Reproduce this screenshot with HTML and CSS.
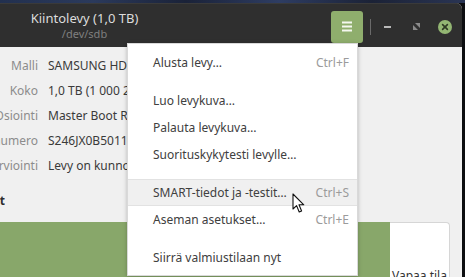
FILE: index.html
```html
<!DOCTYPE html>
<html lang="fi">
<head>
<meta charset="utf-8">
<link rel="stylesheet" href="styles.css">
</head>
<body>
<div class="desktop">
  <div class="wallpaper-strip"></div>
  <div class="window">
    <header class="headerbar">
      <div class="title-box">
        <div class="title">Kiintolevy (1,0 TB)</div>
        <div class="subtitle">/dev/sdb</div>
      </div>
      <div class="spacer"></div>
      <button class="menu-btn" aria-label="Valikko">
        <svg width="12" height="11" viewBox="0 0 12 11"><rect x="1" y="0.5" width="10" height="2" fill="#f4f7ef"/><rect x="1" y="4.5" width="10" height="2" fill="#f4f7ef"/><rect x="1" y="8.5" width="10" height="2" fill="#f4f7ef"/></svg>
      </button>
      <div class="hsep"></div>
      <div class="wm-btn min"><span class="min-bar"></span></div>
      <div class="wm-btn max">
        <svg width="7" height="7" viewBox="0 0 7 7"><polygon points="2,0 7,0 7,5" fill="#8a8a8a"/><polygon points="0,2 0,7 5,7" fill="#8a8a8a"/></svg>
      </div>
      <div class="wm-btn close">
        <svg width="14" height="14" viewBox="0 0 14 14"><circle cx="7" cy="7" r="7" fill="#93b673"/><path d="M4.6 4.6 L9.4 9.4 M9.4 4.6 L4.6 9.4" stroke="#2e3a24" stroke-width="1.6" stroke-linecap="round"/></svg>
      </div>
    </header>
    <main class="content">
      <div class="info">
        <div class="row"><div class="label"><span>Malli</span></div><div class="value">SAMSUNG HD103SJ</div></div>
        <div class="row"><div class="label"><span>Koko</span></div><div class="value">1,0 TB (1 000 204 886 016 tavua)</div></div>
        <div class="row"><div class="label"><span>Osiointi</span></div><div class="value">Master Boot Record</div></div>
        <div class="row"><div class="label"><span>Sarjanumero</span></div><div class="value">S246JX0B501127</div></div>
        <div class="row"><div class="label"><span>Arviointi</span></div><div class="value">Levy on kunnossa, 33° C</div></div>
      </div>
      <div class="section-head"><span>Taltiot</span></div>
      <div class="volumes">
        <div class="vol-used"></div>
        <div class="vol-free"><span>Vapaa tila</span></div>
        <div class="vol-rest"></div>
      </div>
    </main>
  </div>
  <div class="popover">
    <div class="item"><span>Alusta levy…</span><span class="acc">Ctrl+F</span></div>
    <div class="sep"></div>
    <div class="item"><span>Luo levykuva…</span></div>
    <div class="item"><span>Palauta levykuva…</span></div>
    <div class="item"><span>Suorituskykytesti levylle…</span></div>
    <div class="sep"></div>
    <div class="item hover"><span>SMART-tiedot ja -testit…</span><span class="acc">Ctrl+S</span></div>
    <div class="item"><span>Aseman asetukset…</span><span class="acc">Ctrl+E</span></div>
    <div class="sep"></div>
    <div class="item"><span>Siirrä valmiustilaan nyt</span></div>
  </div>
  <svg class="cursor" width="13" height="21" viewBox="0 0 13 21"><path d="M1 1 L1 16 L4.6 12.6 L7.2 19 L9.6 18 L7 11.8 L11.8 11.8 Z" fill="#ffffff" stroke="#111" stroke-width="1.1" stroke-linejoin="round"/></svg>
</div>
</body>
</html>
```
FILE: styles.css
```css
* { box-sizing: border-box; }
html, body { margin: 0; padding: 0; }
body {
  width: 465px;
  height: 277px;
  overflow: hidden;
  background: #0d0e10;
  font-family: "Noto Sans", "Open Sans", sans-serif;
}
.desktop {
  position: relative;
  width: 465px;
  height: 277px;
  overflow: hidden;
  background: #0c0d10;
}
.wallpaper-strip {
  height: 3px;
  background: linear-gradient(90deg, #22304f 0%, #2b3a5c 20%, #1a2238 40%, #2e3d63 60%, #1b2236 80%, #2a3554 100%);
}
.window {
  width: 462px;
  height: 274px;
  display: flex;
  flex-direction: column;
  border-top-right-radius: 6px;
  overflow: hidden;
  background: #f0f0f0;
}
.headerbar {
  height: 44px;
  flex: none;
  display: flex;
  align-items: center;
  background: #2f2f2f;
  border-top: 1px solid #3a3a3a;
}
.title-box {
  width: 169px;
  text-align: center;
  padding-bottom: 1px;
}
.title {
  color: #dcdcdc;
  font-size: 13px;
  line-height: 17px;
}
.subtitle {
  color: #7f7f7f;
  font-size: 11px;
  line-height: 14px;
}
.spacer { flex: 1; }
.menu-btn {
  width: 32px;
  height: 32px;
  margin-top: 2px;
  border: none;
  border-radius: 3px;
  background: #8fae6d;
  display: flex;
  align-items: center;
  justify-content: center;
  padding: 0;
}
.menu-btn svg { display: block; }
.hsep {
  width: 1px;
  height: 16px;
  margin: 2px 0 0 7px;
  background: #6a6a6a;
}
.wm-btn {
  display: flex;
  align-items: center;
  justify-content: center;
  margin-top: 2px;
}
.min { width: 30px; margin-left: 1px; }
.min-bar { display: block; width: 7px; height: 2px; background: #b9b9b9; }
.max { width: 28px; }
.close { width: 30px; margin-right: 2px; }
.close svg, .max svg { display: block; }

.content {
  flex: 1;
  display: flex;
  flex-direction: column;
}
.info {
  padding-top: 6px;
  display: flex;
  flex-direction: column;
}
.row {
  height: 25px;
  display: flex;
  align-items: center;
  font-size: 12px;
  white-space: nowrap;
}
.label {
  width: 38px;
  flex: none;
  display: flex;
  justify-content: flex-end;
  overflow: hidden;
  color: #8c8c8c;
}
.label span { flex: none; }
.value {
  margin-left: 10px;
  color: #3a3a3a;
}
.section-head {
  width: 5px;
  height: 24px;
  margin-top: 10px;
  display: flex;
  align-items: center;
  justify-content: flex-end;
  overflow: hidden;
  font-size: 12px;
  font-weight: bold;
  color: #2e2e2e;
  white-space: nowrap;
}
.section-head span { flex: none; }
.volumes {
  margin-top: 10px;
  flex: 1;
  display: flex;
}
.vol-used {
  width: 390px;
  background: #88a76a;
}
.vol-free {
  width: 60px;
  background: #ffffff;
  border: 1px solid #d6d6d6;
  border-left: none;
  border-bottom: none;
  border-top-right-radius: 4px;
  display: flex;
  align-items: flex-end;
  justify-content: center;
  font-size: 12px;
  color: #333;
  padding-bottom: 0;
}
.vol-free span { margin-bottom: -7px; white-space: nowrap; }
.vol-rest { flex: 1; }

.popover {
  position: absolute;
  left: 127px;
  top: 43px;
  width: 231px;
  padding: 5px 0 4px;
  background: #ffffff;
  border: 1px solid #d9d9d9;
  box-shadow: 0 1px 4px rgba(0,0,0,0.25);
  font-size: 12px;
  color: #404040;
}
.item {
  height: 27px;
  display: flex;
  align-items: center;
  justify-content: space-between;
  padding: 0 8px 0 25px;
  white-space: nowrap;
}
.item.hover {
  background: #f0f0f0;
  border-top: 1px solid #e2e2e2;
  border-bottom: 1px solid #e2e2e2;
}
.acc { color: #9b9b9b; }
.sep { height: 11px; }
.cursor {
  position: absolute;
  left: 292px;
  top: 193px;
}
```
